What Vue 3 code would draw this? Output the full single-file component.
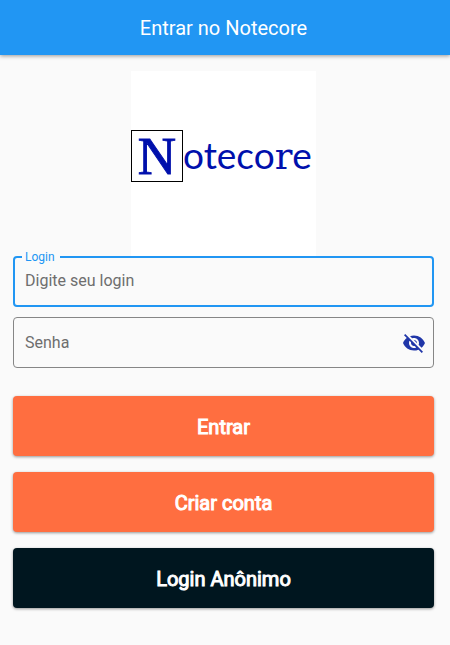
<script setup>
import { ref } from 'vue'

const login = ref('')
const password = ref('')
const passwordVisible = ref(false)
</script>

<template>
  <div class="screen">
    <header class="app-bar">
      <h1>Entrar no Notecore</h1>
    </header>
    <main class="content">
      <div class="logo">
        <span class="logo-initial">N</span>
        <span class="logo-rest">oteco<span class="logo-slab">r</span>e</span>
      </div>
      <form class="form" @submit.prevent>
        <fieldset class="field field-active">
          <legend><label for="login">Login</label></legend>
          <input id="login" v-model="login" type="text" placeholder="Digite seu login" />
        </fieldset>
        <div class="field">
          <input
            id="password"
            v-model="password"
            :type="passwordVisible ? 'text' : 'password'"
            placeholder="Senha"
            aria-label="Senha"
          />
          <button
            class="toggle"
            type="button"
            aria-label="Mostrar senha"
            @click="passwordVisible = !passwordVisible"
          >
            <svg viewBox="0 0 24 24" width="24" height="24" aria-hidden="true">
              <path
                fill="currentColor"
                d="M12 7c2.76 0 5 2.24 5 5 0 .65-.13 1.26-.36 1.83l2.92 2.92c1.51-1.26 2.7-2.89 3.43-4.75-1.73-4.39-6-7.5-11-7.5-1.4 0-2.74.25-3.98.7l2.16 2.16C10.74 7.13 11.35 7 12 7zM2 4.27l2.28 2.28.46.46C3.08 8.3 1.78 10.02 1 12c1.73 4.39 6 7.5 11 7.5 1.55 0 3.03-.3 4.38-.84l.42.42L19.73 22 21 20.73 3.27 3 2 4.27zM7.53 9.8l1.55 1.55c-.05.21-.08.43-.08.65 0 1.66 1.34 3 3 3 .22 0 .44-.03.65-.08l1.55 1.55c-.67.33-1.41.53-2.2.53-2.76 0-5-2.24-5-5 0-.79.2-1.53.53-2.2zm4.31-.78l3.15 3.15.02-.16c0-1.66-1.34-3-3-3l-.17.01z"
              />
            </svg>
          </button>
        </div>
        <div class="actions">
          <button class="action" type="submit">Entrar</button>
          <button class="action" type="button">Criar conta</button>
          <button class="action action-dark" type="button">Login Anônimo</button>
        </div>
      </form>
    </main>
  </div>
</template>

<style>
body {
  background: #fafafa;
}
</style>

<style scoped>
.screen {
  font-family: Roboto, sans-serif;
}

.app-bar {
  display: flex;
  align-items: center;
  justify-content: center;
  height: 55px;
  padding: 0 16px 0 13px;
  background: #2196f3;
  box-shadow: 0 1px 4px rgba(0, 0, 0, 0.4);
}

h1 {
  margin: 0;
  color: #fff;
  font-size: 20px;
  font-weight: 400;
  line-height: 24px;
}

.content {
  padding: 16px 16px 16px 13px;
}

.logo {
  display: flex;
  align-items: center;
  box-sizing: border-box;
  width: 185px;
  height: 185px;
  margin: 0 auto;
  padding-bottom: 15px;
  background: #fff;
  color: #0010ac;
}

.logo-initial {
  display: flex;
  align-items: center;
  justify-content: center;
  box-sizing: border-box;
  width: 52px;
  height: 52px;
  border: 1px solid #000;
  font-family: "Liberation Serif", serif;
  font-size: 53px;
  line-height: 50px;
  -webkit-text-stroke: 1px #0010ac;
}

.logo-rest {
  font-family: Lato, sans-serif;
  font-size: 37px;
  line-height: 52px;
}

.logo-slab {
  font-family: "DejaVu Serif", serif;
}

.form {
  display: flex;
  flex-direction: column;
  gap: 10px;
}

.field {
  display: flex;
  align-items: center;
  box-sizing: border-box;
  min-width: 0;
  height: 51px;
  margin: 0;
  padding: 0 7px 0 11px;
  border: 1px solid #868686;
  border-radius: 4px;
}

.field-active {
  padding: 0 10px;
  border: 2px solid #2196f3;
}

legend {
  height: 2px;
  margin-left: -3px;
  padding: 0 5px 0 3px;
  color: #2196f3;
  font-size: 12px;
  line-height: 2px;
}

legend label {
  display: block;
}

input {
  flex: 1;
  box-sizing: border-box;
  min-width: 0;
  height: 46px;
  padding: 0;
  border: 0;
  outline: 0;
  background: none;
  color: #212121;
  font: 16px Roboto, sans-serif;
}

.field-active input {
  padding-bottom: 2px;
}

input::placeholder {
  color: #6e6e6e;
  opacity: 1;
}

.toggle {
  display: flex;
  padding: 0;
  border: 0;
  background: none;
  color: #2036a8;
  cursor: pointer;
}

.actions {
  display: flex;
  flex-direction: column;
  gap: 16px;
  margin-top: 18px;
}

.action {
  height: 60px;
  padding: 2px 0 0;
  border: 0;
  border-radius: 4px;
  background: #ff6e40;
  box-shadow: 0 1px 3px rgba(0, 0, 0, 0.4);
  color: #fff;
  font: 400 20px Roboto, sans-serif;
  -webkit-text-stroke: 1px #fff;
  cursor: pointer;
}

.action-dark {
  background: #00161f;
}
</style>
